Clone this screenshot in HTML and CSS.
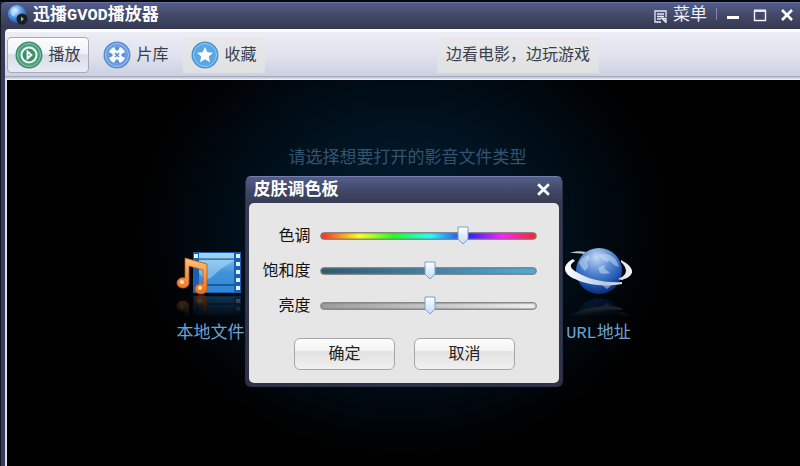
FILE: index.html
```html
<!DOCTYPE html>
<html lang="zh-CN">
<head>
  <meta charset="UTF-8">
  <title>迅播GVOD播放器</title>
  <meta name="viewport" content="width=device-width, initial-scale=1">
  <link rel="stylesheet" href="styles.css">
</head>
<body>
  <div class="window">
    <header class="titlebar">
      <svg class="app-icon" viewBox="0 0 20 20" aria-hidden="true">
        <defs>
          <radialGradient id="appBlue" cx="0.4" cy="0.3" r="0.7">
            <stop offset="0" stop-color="#d5ebff"/>
            <stop offset="0.5" stop-color="#559be8"/>
            <stop offset="1" stop-color="#1c57b5"/>
          </radialGradient>
        </defs>
        <circle cx="9" cy="9" r="9" fill="url(#appBlue)"/>
        <path d="M3 5c3-3 6-2 7 0s-3 2-3 5-3 1-4-1z" fill="#cfe6fb" opacity="0.6"/>
        <circle cx="14" cy="14" r="5.500" fill="#181c26"/>
        <path d="M13 11.500l3 2.500-3 2.500z" fill="#b9a779"/>
      </svg>
      <h1>迅播GVOD播放器</h1>
      <button class="menu-btn">
        <svg viewBox="0 0 13 13" aria-hidden="true">
          <path d="M12 7V1H1v11h6M3 4h7M3 6.500h7M3 9h4M8 8.500h4v4zM8 8l4 4" fill="none" stroke="#e6e9f5" stroke-width="1.300"/>
        </svg>
        菜单
      </button>
      <span class="divider"></span>
      <div class="window-btns">
        <button aria-label="最小化"><svg viewBox="0 0 14 14"><path d="M1 9.500h12" stroke="#fff" stroke-width="3"/></svg></button>
        <button aria-label="最大化"><svg viewBox="0 0 14 14"><path d="M1.500 3h11v9.500h-11z" fill="none" stroke="#f2f3fa" stroke-width="1.400"/><path d="M1 2.500h12" stroke="#f2f3fa" stroke-width="2"/></svg></button>
        <button aria-label="关闭"><svg viewBox="0 0 14 14"><path d="M2 2l10 10M12 2L2 12" stroke="#fff" stroke-width="2.600"/></svg></button>
      </div>
    </header>

    <nav class="toolbar">
      <button class="tool active">
        <svg viewBox="0 0 28 28" aria-hidden="true">
          <circle cx="14" cy="14" r="13.500" fill="#3f8f6e"/>
          <circle cx="14" cy="14" r="11.500" fill="#4f9f7d" stroke="#8cc7ae" stroke-width="1"/>
          <circle cx="14" cy="14" r="7.500" fill="#3c9069" stroke="#f2fbf7" stroke-width="2"/>
          <path d="M12.500 10.500l4 3.500-4 3.500z" fill="none" stroke="#fff" stroke-width="1.800"/>
        </svg>
        <span>播放</span>
      </button>
      <button class="tool">
        <svg viewBox="0 0 28 28" aria-hidden="true">
          <circle cx="14" cy="14" r="13.500" fill="#5c8ad2"/>
          <circle cx="14" cy="14" r="11.500" fill="#6d9de0" stroke="#a4c4ee" stroke-width="1"/>
          <circle cx="14" cy="14" r="8.500" fill="#f4f9ff"/>
          <path d="M11 5.500h6l-2 4h-2zM11 22.500h6l-2-4h-2zM5.500 11v6l4-2v-2zM22.500 11v6l-4-2v-2z" fill="#5b8cd6"/>
          <path d="M12 12l4 4M16 12l-4 4" stroke="#5b8cd6" stroke-width="1.500"/>
        </svg>
        <span>片库</span>
      </button>
      <button class="tool pale">
        <svg viewBox="0 0 28 28" aria-hidden="true">
          <circle cx="14" cy="14" r="13.500" fill="#4c93d2"/>
          <circle cx="14" cy="14" r="11.500" fill="#5ba6e4" stroke="#9bcdf2" stroke-width="1"/>
          <path d="M14 6l2.400 5.200 5.600.6-4.200 3.800 1.200 5.600-5-2.900-5 2.900 1.200-5.600L6 11.800l5.600-.6z" fill="#fff"/>
        </svg>
        <span>收藏</span>
      </button>
      <a class="slogan" href="#">边看电影，边玩游戏</a>
    </nav>

    <main class="stage">
      <p class="hint">请选择想要打开的影音文件类型</p>
      <div class="sources">
        <a class="source" href="#">
          <svg viewBox="0 0 70 74" aria-hidden="true">
            <defs>
              <linearGradient id="film" x1="0" y1="0" x2="0" y2="1">
                <stop offset="0" stop-color="#8ccbf5"/>
                <stop offset="0.5" stop-color="#4093d8"/>
                <stop offset="1" stop-color="#2f86d6"/>
              </linearGradient>
              <linearGradient id="note" x1="0" y1="0" x2="0" y2="1">
                <stop offset="0" stop-color="#ffc27a"/>
                <stop offset="1" stop-color="#ea6d17"/>
              </linearGradient>
              <linearGradient id="fade" x1="0" y1="0" x2="0" y2="1">
                <stop offset="0" stop-color="#fff" stop-opacity="0.35"/>
                <stop offset="0.85" stop-color="#fff" stop-opacity="0"/>
              </linearGradient>
              <mask id="reflection" maskUnits="userSpaceOnUse" x="0" y="48" width="70" height="26">
                <path d="M0 48h70v26H0z" fill="url(#fade)"/>
              </mask>
              <g id="media">
                <path d="M18 5h48v41H18z" fill="#1b5fae"/>
                <path d="M24 6h35v6H24zM24 13h35v24H24zM24 39h35v6H24z" fill="url(#film)"/>
                <path d="M30 33c8-1 12-10 19-13 4-2 7-5 10-6V6H24v20z" fill="#b7e0fa" opacity="0.5"/>
                <path d="M24 12h35M24 38h35" stroke="#155296" stroke-width="1"/>
                <path d="M19 7h4v4h-4zM61 7h4v4h-4zM61 15h4v4h-4zM61 23h4v4h-4zM61 31h4v4h-4zM61 39h4v4h-4z" fill="#d9f2ff"/>
                <path d="M10 11l22 6v25c0 3-3 5-6 5s-6-2-6-5c0-4 4-6 8-5V23l-14-4v17c0 3-3 5-6 5s-6-2-6-5c0-4 4-6 8-5z" fill="url(#note)" stroke="#b95312" stroke-width="0.800"/>
                <circle cx="7" cy="35" r="2" fill="#ffe0bb"/>
                <circle cx="25" cy="41" r="2" fill="#ffe0bb"/>
              </g>
            </defs>
            <g mask="url(#reflection)"><use href="#media" transform="translate(-1 95) scale(1 -1)"/></g>
            <use href="#media" transform="translate(-1 0)"/>
          </svg>
          <span>本地文件</span>
        </a>
        <a class="source" href="#">
          <svg viewBox="0 0 70 74" aria-hidden="true">
            <defs>
              <radialGradient id="globe" cx="0.45" cy="0.2" r="0.8">
                <stop offset="0" stop-color="#c3d9f7"/>
                <stop offset="0.400" stop-color="#5b8cd2"/>
                <stop offset="0.750" stop-color="#1d55b4"/>
                <stop offset="1" stop-color="#0b2a73"/>
              </radialGradient>
              <linearGradient id="ring" x1="0" y1="0" x2="1" y2="0">
                <stop offset="0" stop-color="#ffffff"/>
                <stop offset="0.600" stop-color="#b8c6de"/>
                <stop offset="1" stop-color="#f3f3f3"/>
              </linearGradient>
              <g id="earth">
                <path d="M6 6c5-2 11-2 16-1l-2 2c-5-1-9-1-14-1z" fill="#bac3d2"/>
                <circle cx="35" cy="24" r="23" fill="url(#globe)"/>
                <path d="M15 16c2-5 6-7 10-8l1 4-3 3 1 5-3 4-3-3zM35 8c6-3 13 0 17 5l3 7-5-2-4-4-4 1-4-3zM34 21l6-3 1 4 5 4-5 1-5-1zM38 38l7-3 4 2-6 5z" fill="#cfe0f6" opacity="0.500"/>
                <path d="M9 12C-1 17-3 26 11 32c12 6 30 8 47 5v-2c-15 1-31-2-42-8C6 22 4 18 11 14zM57 13c13 7 16 15 1 20l-4-1c10-4 10-10 3-17z" fill="url(#ring)"/>
              </g>
            </defs>
            <g mask="url(#reflection)"><use href="#earth" transform="translate(0 98) scale(1 -1)"/></g>
            <use href="#earth"/>
          </svg>
          <span>URL地址</span>
        </a>
      </div>

      <section class="palette" role="dialog" aria-labelledby="paletteTitle">
        <div class="palette-head">
          <h2 id="paletteTitle">皮肤调色板</h2>
          <button aria-label="关闭"><svg viewBox="0 0 14 14"><path d="M2 2l10 10M12 2L2 12" stroke="#fff" stroke-width="2.600"/></svg></button>
        </div>
        <form class="palette-body">
          <div class="sliders">
            <label for="hue">色调</label>
            <input type="range" id="hue" class="hue" min="0" max="100" value="67">
            <label for="saturation">饱和度</label>
            <input type="range" id="saturation" class="saturation" min="0" max="100" value="51">
            <label for="brightness">亮度</label>
            <input type="range" id="brightness" class="brightness" min="0" max="100" value="51">
          </div>
          <div class="actions">
            <button type="button">确定</button>
            <button type="button">取消</button>
          </div>
        </form>
      </section>
    </main>
  </div>
</body>
</html>
```
FILE: styles.css
```css
* {
  box-sizing: border-box;
}
body {
  margin: 0;
  background: #000;
  font-family: "Liberation Mono", "Noto Sans CJK SC", monospace;
  font-size: 16px;
  line-height: 20px;
}
button {
  margin: 0;
  padding: 0;
  border: none;
  background: none;
  font: inherit;
  color: inherit;
  cursor: pointer;
}
a {
  text-decoration: none;
}
svg {
  display: block;
}
h1,
h2 {
  margin: 0;
  padding-top: 2px;
  font-size: 17px;
  line-height: 20px;
  color: #fff;
}

/* window frame */
.window {
  display: flex;
  flex-direction: column;
  min-height: 100vh;
  padding-left: 4px;
  border-top: 2px solid #05060a;
  border-left: 1px solid #14161f;
  background: #3a3d59;
}
.titlebar {
  display: flex;
  align-items: center;
  height: 27px;
  margin-left: -4px;
  padding: 0 6px 2px 7px;
  border-top: 1px solid #6673a3;
  border-radius: 6px 0 0 0;
  background: linear-gradient(#535d8c, #414765 50%, #353952);
}
.app-icon {
  width: 20px;
  height: 20px;
  margin-right: 5px;
}
.titlebar h1 {
  flex: 1;
}
.menu-btn {
  display: flex;
  align-items: center;
  gap: 6px;
  padding-top: 2px;
  color: #eef0fa;
  font-size: 17px;
}
.menu-btn svg {
  width: 13px;
  height: 13px;
}
.divider {
  width: 1px;
  height: 12px;
  margin: 0 9px 2px;
  background: #8088ab;
}
.window-btns {
  display: flex;
  gap: 13px;
}
.window-btns svg {
  width: 14px;
  height: 14px;
}

/* toolbar */
.toolbar {
  display: flex;
  align-items: center;
  gap: 6px;
  height: 51px;
  padding: 0 2px 2px;
  border-top: 3px solid #fbfbfe;
  border-bottom: 1px solid #eef0f6;
  border-radius: 4px 0 0 0;
  background: linear-gradient(#ecedf5, #e0e2ed 50%, #cdd0e2 93%, #9a9fb4 94%, #d4d9e4 98%);
}
.tool {
  display: flex;
  align-items: center;
  justify-content: center;
  gap: 5px;
  width: 82px;
  height: 36px;
  border: 1px solid transparent;
  border-radius: 4px;
  color: #38414d;
}
.tool svg {
  width: 28px;
  height: 28px;
}
.tool span {
  padding-top: 2px;
}
.tool.active {
  border-color: #a5a9ba;
  background: linear-gradient(#fdfdff, #f1f2f8 45%, #d9dce9 50%, #e9ebf4);
}
.tool.pale {
  border: none;
  border-radius: 0;
}
.tool.pale,
.slogan {
  background: linear-gradient(#e9e9ec, #dfe0e1);
}
.slogan {
  height: 36px;
  margin-left: 166px;
  padding: 9px 9px 7px;
  color: #38414d;
}

/* stage */
.stage {
  position: relative;
  flex: 1;
  padding-top: 68px;
  border-left: 2px solid #d9dde6;
  background: radial-gradient(ellipse 270px 230px at 50% 150px, #021d33, #011321 45%, #000 100%) #000;
}
.hint {
  margin: 0;
  padding-left: 8px;
  text-align: center;
  font-size: 17px;
  line-height: 22px;
  color: #34536f;
}
.sources {
  display: flex;
  justify-content: center;
  gap: 318px;
  margin-top: 77px;
  padding-left: 2px;
}
.source {
  display: flex;
  flex-direction: column;
  align-items: center;
  gap: 3px;
  width: 70px;
  color: #6ea3cf;
  font-size: 17px;
  white-space: nowrap;
}
.source svg {
  width: 70px;
  height: 74px;
}

/* skin palette dialog */
.palette {
  position: absolute;
  inset: 16px 0 0;
  width: 318px;
  height: fit-content;
  margin: auto;
  padding: 0 3px 3px;
  border: 1px solid #2b2e45;
  border-top-color: #7580aa;
  border-radius: 6px;
  background: linear-gradient(#535d8c, #414765 14px, #353952 28px, #2f3246);
}
.palette-head {
  display: flex;
  align-items: center;
  justify-content: space-between;
  height: 26px;
  padding: 0 8px 0 5px;
}
.palette-head svg {
  width: 15px;
  height: 15px;
}
.palette-body {
  padding: 23px 22px 13px 14px;
  border-radius: 5px;
  background: #e6e6e6;
}
.sliders {
  display: grid;
  grid-template-columns: auto 1fr;
  align-items: center;
  gap: 15px 9px;
  color: #111;
}
.sliders label {
  padding-top: 2px;
  line-height: 18px;
  text-align: right;
}
.sliders input {
  appearance: none;
  width: 100%;
  height: 20px;
  margin: 0;
  background: none;
}
.sliders input::-webkit-slider-runnable-track {
  height: 8px;
  border: 1px solid #888;
  border-radius: 4px;
  background-origin: border-box;
  box-shadow: inset 0 0 1px 1px rgba(120, 120, 120, 0.5);
}
.sliders input::-webkit-slider-thumb {
  appearance: none;
  width: 12px;
  height: 19px;
  margin-top: -7px;
  background: url('data:image/svg+xml,<svg xmlns="http://www.w3.org/2000/svg" viewBox="0 0 12 19"><defs><linearGradient id="g" x2="0" y2="1"><stop stop-color="%23fff"/><stop offset="1" stop-color="%23bfdcf8"/></linearGradient></defs><path d="M1 1h10v12l-5 5-5-5z" fill="url(%23g)" stroke="%237b9fcb"/></svg>');
}
.hue::-webkit-slider-runnable-track {
  background: linear-gradient(90deg, #f22, #ff2 18%, #2f2 34%, #2ff 51%, #22f 68%, #f2f 84%, #f22);
}
.saturation::-webkit-slider-runnable-track {
  background: linear-gradient(90deg, #2d5a70, #4aaee0);
}
.brightness::-webkit-slider-runnable-track {
  background: linear-gradient(90deg, #9c9c9c, #efefef);
}
.actions {
  display: flex;
  justify-content: center;
  gap: 19px;
  margin-top: 22px;
  padding-left: 10px;
}
.actions button {
  width: 101px;
  height: 32px;
  padding-top: 2px;
  border: 1px solid #a6a6a6;
  border-radius: 6px;
  background: linear-gradient(#fdfdfd, #f4f4f4 38%, #e2e2e2 42%, #f0f0f0);
  color: #222;
}
```
